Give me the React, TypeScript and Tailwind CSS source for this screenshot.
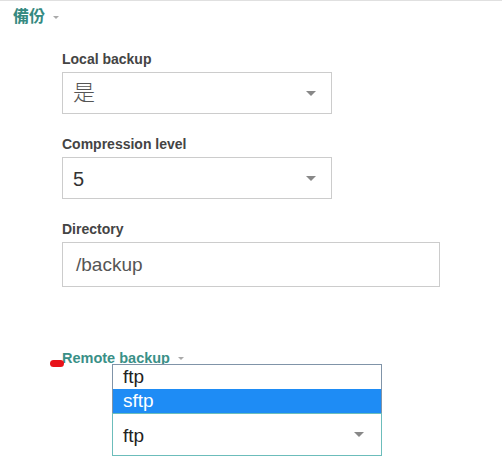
const FONT = "font-['Liberation_Sans','Noto_Sans_CJK_TC',sans-serif]"

function Caret({ className = '' }: { className?: string }) {
  return <span className={`inline-block w-0 h-0 border-x-[3px] border-t-[3px] border-x-transparent border-t-[#aaa] ${className}`} />
}

function Arrow() {
  return <span className="w-0 h-0 border-x-[5px] border-t-[5px] border-x-transparent border-t-[#888]" />
}

function Field({ label, children, first }: { label: string; children: React.ReactNode; first?: boolean }) {
  return (
    <div className={first ? '' : 'mt-[20px]'}>
      <p className="h-[20px] leading-[20px] text-[14px] font-bold text-[#444]">{label}</p>
      <div className="mt-[3px]">{children}</div>
    </div>
  )
}

export default function App() {
  return (
    <div className={`w-[502px] h-[466px] bg-white border-t border-[#e0e0e0] overflow-hidden ${FONT}`}>
      {/* section header */}
      <div className="pt-[4px] pl-[13px] flex items-center h-[28px]">
        <span className="text-[16px] leading-[24px] font-bold text-[#358a81]">備份</span>
        <Caret className="ml-[8px]" />
      </div>

      <div className="pl-[62px] mt-[20px]">
        <Field label="Local backup" first>
          <div className="w-[270px] h-[42px] border border-[#ccc] flex items-center justify-between pl-[10px] pr-[15px]">
            <span className="text-[22px] leading-none font-light text-[#555]">是</span>
            <Arrow />
          </div>
        </Field>

        <Field label="Compression level">
          <div className="w-[270px] h-[42px] border border-[#ccc] flex items-center justify-between pl-[10px] pr-[15px]">
            <span className="text-[20px] leading-none text-[#333] pt-[2px]">5</span>
            <Arrow />
          </div>
        </Field>

        <Field label="Directory">
          <div className="w-[378px] h-[45px] border border-[#ccc] flex items-center pl-[13px]">
            <span className="text-[19px] leading-none text-[#555]">/backup</span>
          </div>
        </Field>

        {/* remote backup */}
        <div className="mt-[61px] relative h-[20px] flex items-center">
          <span className="text-[14.5px] leading-[20px] font-bold text-[#3a9087]">Remote backup</span>
          <Caret className="ml-[8px]" />
          <span className="absolute left-[-12px] top-[12px] w-[14px] h-[7px] rounded-full bg-[#e8121a]" />
        </div>

        <div className="relative ml-[50px] mt-[45px] w-[270px]">
          <div className="absolute bottom-full left-0 w-[270px] border border-b-0 border-[#8094a8] bg-white z-10">
            <div className="h-[24px] leading-[24px] pl-[10px] text-[19px] text-[#222]">ftp</div>
            <div className="h-[24px] leading-[24px] pl-[10px] text-[19px] text-white bg-[#1e8cf5]">sftp</div>
          </div>
          <div className="w-[270px] h-[43px] border border-[#6cbdbb] flex items-center justify-between pl-[10px] pr-[17px]">
            <span className="text-[19px] leading-none text-[#222] pt-[2px]">ftp</span>
            <Arrow />
          </div>
        </div>
      </div>
    </div>
  )
}
